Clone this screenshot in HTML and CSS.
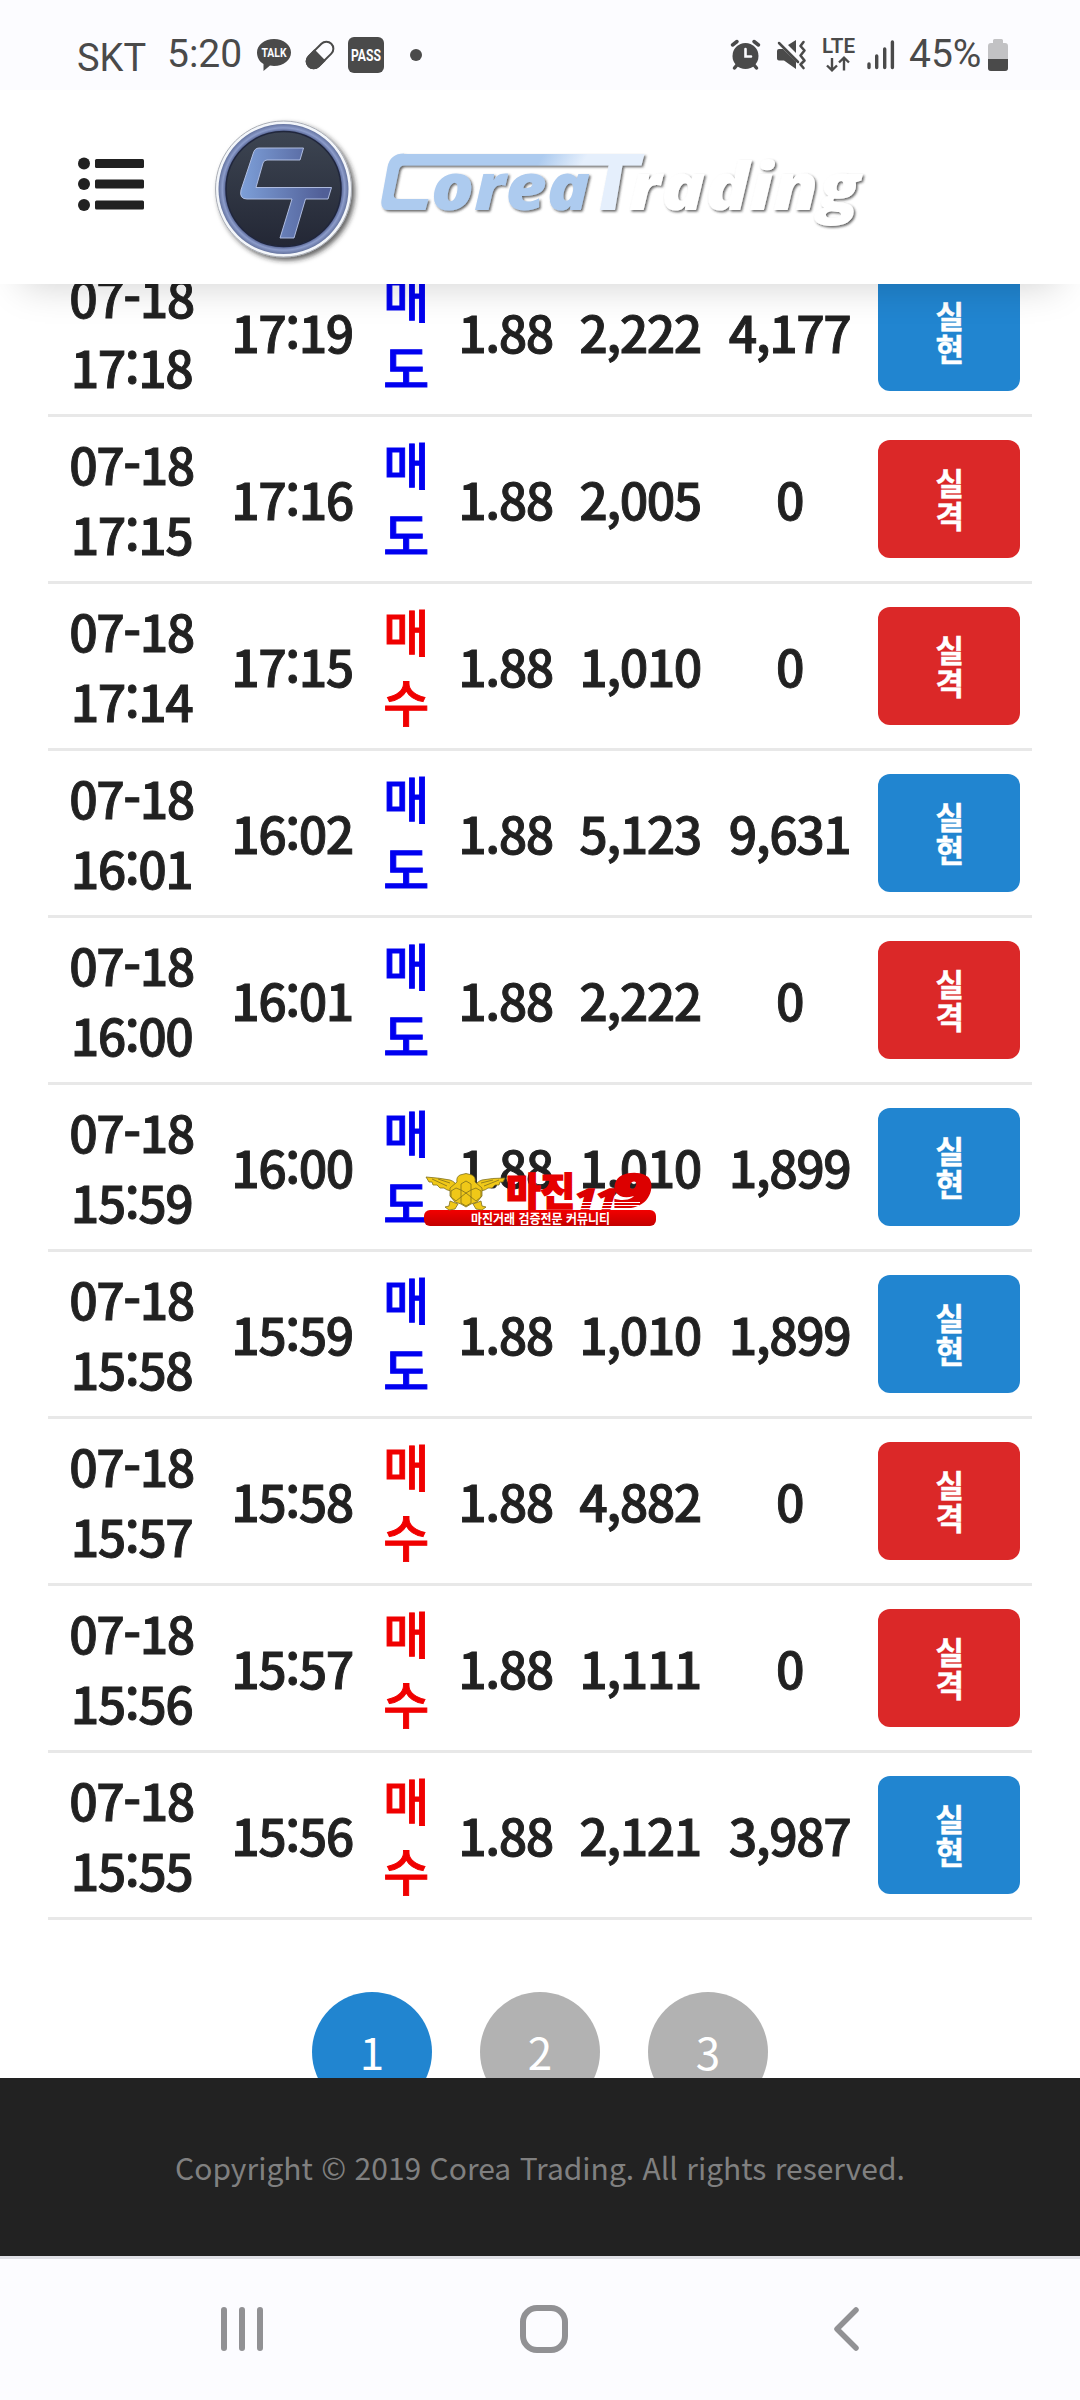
FILE: index.html
```html
<!DOCTYPE html>
<html lang="ko">
<head>
<meta charset="utf-8">
<title>Corea Trading</title>
<link rel="stylesheet" href="styles.css">
</head>
<body>
<div class="screen">
  <div class="status">
    <span class="carrier">SKT</span>
    <span class="clock">5:20</span>
    <svg class="status-left" width="136" height="60" viewBox="250 25 136 60">
      <path d="M274 39c9.500 0 17 6 17 13.500s-7.500 13.500-17 13.500c-1.500 0-2.500-.1-4-.4l-6.500 5.400v-7c-4-2.300-6.500-6.500-6.500-11.500 0-7.500 7.500-13.500 17-13.500z" fill="#4a4a4a"/>
      <text class="talk" x="274" y="57" text-anchor="middle" textLength="25" lengthAdjust="spacingAndGlyphs">TALK</text>
      <g transform="rotate(-45 320 55)"><rect x="304" y="48" width="32" height="14" rx="7" fill="none" stroke="#4a4a4a" stroke-width="2"/><path d="M320 47h-9a8 8 0 0 0 0 16h9z" fill="#4a4a4a"/></g>
      <rect x="348" y="37" width="36" height="36" rx="6" fill="#4a4a4a"/>
      <text class="pass" x="366" y="61" text-anchor="middle" textLength="30" lengthAdjust="spacingAndGlyphs">PASS</text>
    </svg>
    <span class="more-dot"></span>
    <svg class="status-right" width="170" height="60" viewBox="730 25 170 60">
      <g fill="#4a4a4a" stroke="#4a4a4a" stroke-linecap="round">
        <circle cx="745.500" cy="56" r="13" stroke="none"/>
        <path d="M732.500 45l4.500-3.500M758.500 45l-4.500-3.500" stroke-width="3.500" fill="none"/>
        <path d="M737 65l-2.500 3M754 65l2.500 3" stroke-width="3.500" fill="none"/>
        <path d="M745.500 49v7.500h5.500" stroke="#fcfcff" stroke-width="2.600" fill="none"/>
      </g>
      <path d="M777 51q0-2 2-2h4l13 12.500V69l-12-8.500h-5q-2 0-2-2zM788 45l8-5v13z" fill="#4a4a4a"/>
      <path d="M779 43l19 19" stroke="#4a4a4a" stroke-width="2.500" stroke-linecap="round"/>
      <path d="M803.500 42l-3 4 4 4.500-4 5 4 5-4 4 3 3.500" fill="none" stroke="#4a4a4a" stroke-width="2.600" stroke-linecap="round" stroke-linejoin="round"/>
      <text class="lte" x="822" y="53" textLength="33" lengthAdjust="spacingAndGlyphs">LTE</text>
      <path d="M832 58v12M827 65.500l5 4.800 5-4.800M844 70.500V58M839 62.500l5-4.800 5 4.800" fill="none" stroke="#4a4a4a" stroke-width="2.400"/>
      <path d="M869 64v3.500M876.700 56v11.500M884.700 49v18.500M892.400 42v25.500" stroke="#4a4a4a" stroke-width="3.400" stroke-linecap="round"/>
    </svg>
    <span class="percent">45%</span>
    <svg class="battery" width="20" height="60" viewBox="988 25 20 60">
      <path d="M993 43v-2.500q0-1.500 1.500-1.500h7q1.500 0 1.500 1.500V43h2q3 0 3 3v22q0 3-3 3h-14q-3 0-3-3V46q0-3 3-3z" fill="#c2c2c4"/>
      <path d="M988 59h20v9q0 3-3 3h-14q-3 0-3-3z" fill="#4a4a4a"/>
    </svg>
  </div>

  <header class="header">
    <svg class="menu" width="66" height="56" viewBox="0 0 66 56" fill="#212121">
      <circle cx="6" cy="7.500" r="6"/><rect x="17" y="3" width="49" height="9" rx="1.500"/>
      <circle cx="6" cy="28" r="6"/><rect x="17" y="23.500" width="49" height="9" rx="1.500"/>
      <circle cx="6" cy="49" r="6"/><rect x="17" y="44.500" width="49" height="9" rx="1.500"/>
    </svg>
    <svg class="logo" width="680" height="160" viewBox="205 110 680 160">
      <defs>
        <radialGradient id="ring" cx="283.500" cy="189" r="65" gradientUnits="userSpaceOnUse">
          <stop offset=".88" stop-color="#4a5888"/><stop offset=".94" stop-color="#8d9dcb"/><stop offset="1" stop-color="#64739f"/>
        </radialGradient>
        <linearGradient id="disc" x1="0" y1="0" x2="0" y2="1"><stop offset="0" stop-color="#3d4552"/><stop offset="1" stop-color="#232735"/></linearGradient>
        <linearGradient id="steel" x1="241" y1="0" x2="332" y2="0" gradientUnits="userSpaceOnUse"><stop offset="0" stop-color="#7d9fd8"/><stop offset=".9" stop-color="#515f97"/></linearGradient>
        <linearGradient id="sky" x1="540" y1="160" x2="572" y2="180" gradientUnits="userSpaceOnUse"><stop offset="0" stop-color="#adcbef"/><stop offset="1" stop-color="#e5effc"/></linearGradient>
        <filter id="drop" x="-10%" y="-20%" width="120%" height="150%"><feDropShadow dx="1.600" dy="1.600" stdDeviation="1.200" flood-color="#333" flood-opacity=".75"/></filter>
        <filter id="coin" x="-20%" y="-20%" width="140%" height="140%"><feDropShadow dx="3" dy="3" stdDeviation="2.500" flood-color="#222" flood-opacity=".7"/></filter>
      </defs>
      <circle cx="283.500" cy="189" r="68" fill="#f3f6fa" stroke="#a9adb5" stroke-width="1" filter="url(#coin)"/>
      <circle cx="283.500" cy="189" r="65" fill="url(#ring)"/>
      <circle cx="283.500" cy="189" r="57.500" fill="url(#disc)" stroke="#20263c" stroke-width="1.500"/>
      <path d="M259 148h44.500l-3.500 12h-33q-3 0-4 3l-7 24.500h75.500l-3.500 11.500h-22.500l-11.500 39h-14l12-39h-45q-8 0-6-9l12-36q1.500-6 6-6z" fill="url(#steel)" stroke="#b9c6ea" stroke-width=".9"/>
      <g filter="url(#drop)">
        <path d="M404 154h240.500l-3 11.500h-19L615 210h-15l8.600-44.500H404q-4 0-5 4.500l-5 24q-1 5 4 5h30.500l-3 11H389q-9 0-7.500-10l6-33q2.500-13.500 16.500-13.500z" fill="url(#sky)"/>
        <text class="wordmark corea" x="431" y="210" textLength="159" lengthAdjust="spacingAndGlyphs">orea</text>
        <text class="wordmark trading" x="629" y="210" textLength="231" lengthAdjust="spacingAndGlyphs">rading</text>
      </g>
    </svg>
  </header>

  <main class="content">
    <table class="trades">
      <colgroup><col class="c-date"><col class="c-time"><col class="c-side"><col class="c-rate"><col class="c-amount"><col class="c-profit"><col class="c-result"></colgroup>
      <tbody>
        <tr><td>07-18<br>17:18</td><td>17:19</td><td class="sell">매<br>도</td><td>1.88</td><td>2,222</td><td>4,177</td><td><span class="btn win">실<br>현</span></td></tr>
        <tr><td>07-18<br>17:15</td><td>17:16</td><td class="sell">매<br>도</td><td>1.88</td><td>2,005</td><td>0</td><td><span class="btn lose">실<br>격</span></td></tr>
        <tr><td>07-18<br>17:14</td><td>17:15</td><td class="buy">매<br>수</td><td>1.88</td><td>1,010</td><td>0</td><td><span class="btn lose">실<br>격</span></td></tr>
        <tr><td>07-18<br>16:01</td><td>16:02</td><td class="sell">매<br>도</td><td>1.88</td><td>5,123</td><td>9,631</td><td><span class="btn win">실<br>현</span></td></tr>
        <tr><td>07-18<br>16:00</td><td>16:01</td><td class="sell">매<br>도</td><td>1.88</td><td>2,222</td><td>0</td><td><span class="btn lose">실<br>격</span></td></tr>
        <tr><td>07-18<br>15:59</td><td>16:00</td><td class="sell">매<br>도</td><td>1.88</td><td>1,010</td><td>1,899</td><td><span class="btn win">실<br>현</span></td></tr>
        <tr><td>07-18<br>15:58</td><td>15:59</td><td class="sell">매<br>도</td><td>1.88</td><td>1,010</td><td>1,899</td><td><span class="btn win">실<br>현</span></td></tr>
        <tr><td>07-18<br>15:57</td><td>15:58</td><td class="buy">매<br>수</td><td>1.88</td><td>4,882</td><td>0</td><td><span class="btn lose">실<br>격</span></td></tr>
        <tr><td>07-18<br>15:56</td><td>15:57</td><td class="buy">매<br>수</td><td>1.88</td><td>1,111</td><td>0</td><td><span class="btn lose">실<br>격</span></td></tr>
        <tr><td>07-18<br>15:55</td><td>15:56</td><td class="buy">매<br>수</td><td>1.88</td><td>2,121</td><td>3,987</td><td><span class="btn win">실<br>현</span></td></tr>
      </tbody>
    </table>
    <nav class="pages"><a class="page current">1</a><a class="page">2</a><a class="page">3</a></nav>
  </main>

  <footer class="footer">Copyright © 2019 Corea Trading. All rights reserved.</footer>

  <div class="navbar">
    <svg width="1080" height="141" viewBox="0 2259 1080 141" fill="none" stroke="#919194" stroke-width="6" stroke-linecap="round" stroke-linejoin="round">
      <path d="M224 2310v38M242 2310v38M260 2310v38"/>
      <rect x="523" y="2308" width="42" height="42" rx="14"/>
      <path d="M856 2310l-19 19 19 19" stroke-width="5.500"/>
    </svg>
  </div>

  <svg class="watermark" width="236" height="60" viewBox="422 1170 236 60">
    <defs><linearGradient id="red" x1="0" y1="0" x2="0" y2="1"><stop offset="0" stop-color="#f20000"/><stop offset="1" stop-color="#c40000"/></linearGradient></defs>
    <rect x="424" y="1210" width="232" height="16" rx="6" fill="url(#red)"/>
    <text class="wm-sub" x="471" y="1223" textLength="139" lengthAdjust="spacingAndGlyphs">마진거래 검증전문 커뮤니티</text>
    <text class="wm-title" x="506" y="1205" textLength="69" lengthAdjust="spacingAndGlyphs">마진</text>
    <text class="wm-num eleven" x="575" y="1209" textLength="42" lengthAdjust="spacingAndGlyphs">11</text>
    <text class="wm-num nine" x="612" y="1208" textLength="40" lengthAdjust="spacingAndGlyphs">9</text>
    <path d="M576 1202.500h64M575 1205.500h64M574 1208.500h60" stroke="#fff" stroke-width="1"/>
    <g fill="#f0c818" stroke="#80701c" stroke-width=".8" stroke-linejoin="round">
      <path d="M450 1201l-1 5-4 1 4 3 6-1 3-5zM481 1201l1 5 4 1-4 3-6-1-3-5z"/>
      <path d="M426 1177q14 1 24 3 6 2 7 7l-6 4q-5-1-7-3h-4l-3-3h-4l-1-3h-3zM505 1178q-13 0-23 2-6 2-7 7l6 4q5-1 7-3h4l3-3h4l1-3h3z"/>
      <path d="M457 1182q-1-5 3-7l6-1.500 6 1.500q4 2 3 7l7 6v8l-5 6-6 2-5 3-5-3-6-2-5-6v-8z"/>
      <path d="M461 1184l5-3 5 3v6l-5 3-5-3zM451 1191l5-3 5 2v7l-5 4-5-4zM481 1191l-5-3-5 2v7l5 4 5-4zM461 1197l5-4 5 4v6l-5 3-5-3zM432 1179l15 7M499 1180l-15 6M438 1179l12 4M493 1180l-12 3" fill="none"/>
    </g>
  </svg>
</div>
</body>
</html>
```
FILE: styles.css
```css
* { box-sizing: border-box; }

body {
  margin: 0;
  background: #fff;
  color: #212121;
  font-family: "Noto Sans CJK KR", sans-serif;
}

.screen {
  position: relative;
  display: flex;
  flex-direction: column;
  width: 1080px;
  height: 2400px;
  overflow: hidden;
}

/* Status bar */
.status {
  display: flex;
  flex: none;
  height: 90px;
  padding: 25px 72px 5px 77px;
  background: #fcfcff;
  color: #4a4a4a;
  font: 39px/60px Roboto, sans-serif;
}
.carrier { width: 90px; padding-top: 3px; font-size: 38px; }
.clock { width: 83px; margin-top: -1px; }
.more-dot { width: 12px; height: 12px; margin: 24px 0 0 24px; border-radius: 50%; background: #4a4a4a; }
.status-right { margin-left: 308px; }
.percent { width: 79px; margin: -1px 0 0 9px; }
.talk, .pass { fill: #fcfcff; font: 700 12px/1 Roboto, sans-serif; }
.pass { font-size: 17px; }
.lte { fill: #4a4a4a; font: 600 20px/1 Roboto, sans-serif; }

/* Page header */
.header {
  position: relative;
  z-index: 1;
  display: flex;
  flex: none;
  height: 194px;
  padding: 20px 0 0 78px;
  background: #fff;
  box-shadow: 0 24px 36px -22px rgba(0, 0, 0, .18);
}
.menu { margin-top: 46px; }
.logo { margin-left: 61px; }
.wordmark { font: italic 800 66px/1 "Open Sans", sans-serif; }
.corea { fill: #adcbef; }
.trading { fill: #fff; }

/* Trade list */
.content {
  flex: none;
  height: 1794px;
  padding: 0 48px;
  overflow: hidden;
}
.trades {
  width: 984px;
  margin-top: -34px;
  border-spacing: 0;
  table-layout: fixed;
  font-size: 50px;
  font-weight: 500;
  line-height: 70px;
  letter-spacing: -1.5px;
  text-align: center;
  -webkit-text-stroke: .9px currentColor;
}
.trades td { height: 167px; padding: 11px 0 13px; border-bottom: 3px solid #e8e8e8; }
.c-date { width: 167px; }
.c-time { width: 154px; }
.c-side { width: 73px; }
.c-rate { width: 127px; }
.c-amount { width: 142px; }
.c-profit { width: 157px; }
.c-result { width: 164px; }
.sell { color: #0000f0; }
.buy { color: #f00000; }
.btn {
  display: block;
  width: 142px;
  height: 118px;
  margin: 2px 0 0 10px;
  padding-top: 25px;
  border-radius: 12px;
  color: #fff;
  font-size: 31px;
  font-weight: 700;
  line-height: 33px;
  -webkit-text-stroke-width: .4px;
}
.win { background: #2185d0; }
.lose { background: #db2828; }

/* Pagination */
.pages { display: flex; justify-content: center; gap: 48px; margin-top: 72px; }
.page {
  width: 120px;
  height: 120px;
  border-radius: 50%;
  background: #b2b2b2;
  color: #fff;
  font-size: 44px;
  line-height: 118px;
  text-align: center;
}
.current { background: #2185d0; }

.footer {
  flex: none;
  height: 178px;
  background: #222;
  color: #808080;
  font-size: 30px;
  line-height: 178px;
  text-align: center;
}

/* System navigation */
.navbar { flex: none; height: 144px; border-top: 3px solid #dfe0e6; background: #fcfcff; }
.navbar svg { display: block; }

/* Floating badge over the list */
.watermark { position: absolute; z-index: 2; left: 422px; top: 1170px; }
.wm-sub { fill: #fff; font: 700 13px/1 "Noto Sans CJK KR", sans-serif; }
.wm-title { fill: #e60000; stroke: #e60000; stroke-width: 1.6px; font: 900 38px/1 "Noto Sans CJK KR", sans-serif; }
.wm-num { fill: #dc0000; stroke: #dc0000; stroke-width: 1.6px; font-family: "Open Sans", sans-serif; font-style: italic; font-weight: 800; }
.eleven { font-size: 29px; }
.nine { font-size: 47px; }
```
